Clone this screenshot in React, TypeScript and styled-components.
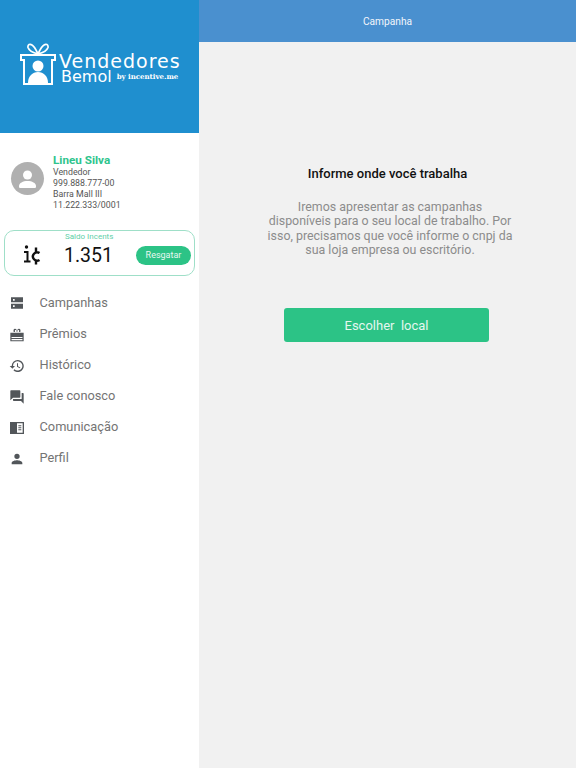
import React from "react"
import styled, { createGlobalStyle } from "styled-components"

const GlobalStyle = createGlobalStyle`
  html, body {
    margin: 0;
    padding: 0;
    height: 768px;
    overflow: hidden;
    background: #f1f1f1;
    font-family: Roboto, "Liberation Sans", sans-serif;
  }
`

const Page = styled.div`
  display: flex;
  width: 576px;
  height: 768px;
`
const Sidebar = styled.aside`
  width: 199px;
  flex-shrink: 0;
  background: #fff;
  display: flex;
  flex-direction: column;
`
const LogoArea = styled.div`
  height: 133px;
  background: #1f8fcf;
  display: flex;
  align-items: center;
  padding: 0 0 6px 20px;
  box-sizing: border-box;
  color: #fff;
`
const LogoText = styled.div`
  display: flex;
  flex-direction: column;
  margin-left: 3px;
  margin-top: 11px;
`
const LogoTitle = styled.div`
  font-family: "DejaVu Sans", sans-serif;
  font-size: 19px;
  line-height: 15px;
  letter-spacing: 1px;
`
const LogoSub = styled.div`
  display: flex;
  align-items: baseline;
  gap: 5px;
  margin-left: 2px;
`
const LogoBemol = styled.span`
  font-family: "DejaVu Sans", sans-serif;
  font-size: 16px;
  line-height: 15px;
`
const LogoBy = styled.span`
  font-family: "DejaVu Serif", serif;
  font-size: 7px;
  font-weight: 700;
  position: relative;
  top: -3px;
`
const Profile = styled.div`
  display: flex;
  align-items: flex-start;
  padding: 21px 0 0 11px;
`
const Avatar = styled.div`
  width: 33px;
  height: 33px;
  border-radius: 50%;
  background: #b0b0b0;
  display: flex;
  align-items: center;
  justify-content: center;
  margin: 8px 9px 0 0;
`
const ProfileText = styled.div`
  display: flex;
  flex-direction: column;
`
const ProfileName = styled.div`
  color: #2fc48d;
  font-size: 11.7px;
  font-weight: 700;
  line-height: 13px;
`
const ProfileLine = styled.div`
  color: #555;
  font-size: 8.8px;
  line-height: 11px;
`
const Balance = styled.div`
  margin: 19px 0 0 4px;
  width: 191px;
  height: 46px;
  box-sizing: border-box;
  border: 1px solid #9fdfc8;
  border-radius: 10px;
  position: relative;
  display: flex;
  align-items: center;
  padding: 4px 3px 0 19px;
`
const BalanceLabel = styled.div`
  position: absolute;
  top: 0;
  left: 60px;
  color: #5fcfa8;
  font-size: 8px;
  line-height: 11px;
`
const BalanceValue = styled.div`
  flex: 1;
  text-align: center;
  color: #111;
  font-size: 19.5px;
`
const RedeemButton = styled.div`
  width: 55px;
  height: 19px;
  border-radius: 10px;
  background: #2cc386;
  color: #e8f8f1;
  font-size: 9px;
  display: flex;
  align-items: center;
  justify-content: center;
`
const Menu = styled.nav`
  display: flex;
  flex-direction: column;
  margin-top: 11px;
`
const MenuItem = styled.div`
  height: 31px;
  display: flex;
  align-items: center;
  padding-left: 9px;
  color: #747474;
  font-size: 12.8px;
`
const MenuIcon = styled.svg<{ $drop: number }>`
  width: 16px;
  height: 16px;
  margin-right: 14.5px;
  margin-top: ${props => props.$drop}px;
  fill: #52565a;
`
const Main = styled.main`
  flex: 1;
  display: flex;
  flex-direction: column;
`
const TopBar = styled.div`
  height: 42px;
  background: #4a90cf;
  color: #f2f6fb;
  font-size: 10.2px;
  display: flex;
  align-items: center;
  justify-content: center;
`
const Content = styled.div`
  display: flex;
  flex-direction: column;
  align-items: center;
  padding-top: 124px;
`
const Heading = styled.h2`
  margin: 0;
  color: #111;
  font-size: 13px;
  font-weight: 500;
  line-height: 16px;
`
const Description = styled.p`
  margin: 18px 0 0 5px;
  width: 247px;
  color: #8c8c8c;
  font-size: 12.4px;
  line-height: 14.4px;
  text-align: center;
`
const ChooseButton = styled.div`
  margin: 50.4px 2px 0 0;
  width: 205px;
  height: 34px;
  border-radius: 3px;
  background: #2cc386;
  color: #e4f7ef;
  font-size: 13px;
  white-space: pre;
  display: flex;
  align-items: center;
  justify-content: center;
`

const menuItems = [
  { label: "Campanhas", drop: 1, icon: "M3 3.500h18v7.500H3V3.500zm0 9.500h18v7.500H3V13zm3-7v2.500h2.500V6H6zm0 9.500V18h2.500v-2.500H6z" },
  { label: "Prêmios", drop: 2, icon: "M2 8.500h20v13H2v-13zM3.800 15v1.500h16.400V15H3.800zm0 3v1.900h16.400V18H3.800zM7 7.500C6 3.500 8 2 10 3c1 .5 2 2 2 3 0-1 1-2.500 2-3 2-1 4 .5 3 4.500h-2c.5-2 0-3-1-3s-1.500 1-1.500 3h-1c0-2-.5-3-1.500-3s-1.500 1-1 3H7z" },
  { label: "Histórico", drop: 3, icon: "M13 3a9 9 0 0 0-9 9H1l3.900 3.900.1.100L9 12H6a7 7 0 1 1 2.100 4.900l-1.400 1.400A9 9 0 1 0 13 3zm-1 5v5l4.300 2.500.7-1.200-3.500-2.100V8H12z" },
  { label: "Fale conosco", drop: 3, icon: "M21 6h-2v9H6v2c0 .6.400 1 1 1h11l4 4V7c0-.6-.400-1-1-1zm-4 6V3c0-.6-.400-1-1-1H3c-.6 0-1 .4-1 1v14l4-4h10c.6 0 1-.4 1-1z" },
  { label: "Comunicação", drop: 3, icon: "M1.500 3h21v18h-21V3zM12 5v14h8.500V5H12zm2 3h4.500v1.500H14V8zm0 3h4.500v1.500H14V11zm0 3h4.500v1.500H14V14z" },
  { label: "Perfil", drop: 3, icon: "M12 12a4 4 0 1 0 0-8 4 4 0 0 0 0 8zm0 2c-2.700 0-8 1.300-8 4v2h16v-2c0-2.700-5.300-4-8-4z" },
]

export default function App() {
  return (
    <Page>
      <GlobalStyle />
      <Sidebar>
        <LogoArea>
          <svg width="36" height="42" viewBox="0 0 36 42" fill="none">
            <path d="M18 11C14 10 9 7.500 8 4.500 7.500 1.500 10 .5 12 2 15 4 16.500 8 18 11zM18 11c4-1 9-3.500 10-6.500.5-3-2-4-4-2.500-3 2-4.500 6-6 9z" stroke="#fff" strokeWidth="1.700" />
            <path d="M1 12h34v5h-3v24H4V17H1z" stroke="#fff" strokeWidth="2" />
            <circle cx="18" cy="23" r="5.500" fill="#fff" />
            <path d="M8 40c0-7 4.500-11 10-11s10 4 10 11z" fill="#fff" />
          </svg>
          <LogoText>
            <LogoTitle>Vendedores</LogoTitle>
            <LogoSub>
              <LogoBemol>Bemol</LogoBemol>
              <LogoBy>by incentive.me</LogoBy>
            </LogoSub>
          </LogoText>
        </LogoArea>
        <Profile>
          <Avatar>
            <svg width="17" height="18" viewBox="0 0 17 18" fill="#fff">
              <circle cx="8.500" cy="5" r="4.500" />
              <path d="M1 18c-1 0-1-1-1-2 0-3 4-5 8.500-5S17 13 17 16c0 1 0 2-1 2z" />
            </svg>
          </Avatar>
          <ProfileText>
            <ProfileName>Lineu Silva</ProfileName>
            <ProfileLine>Vendedor</ProfileLine>
            <ProfileLine>999.888.777-00</ProfileLine>
            <ProfileLine>Barra Mall III</ProfileLine>
            <ProfileLine>11.222.333/0001</ProfileLine>
          </ProfileText>
        </Profile>
        <Balance>
          <BalanceLabel>Saldo Incents</BalanceLabel>
          <svg width="17" height="20" viewBox="0 0 17 20" fill="none" stroke="#111">
            <circle cx="2.500" cy="2" r="1.700" fill="#111" stroke="none" />
            <path d="M0 7h3.500v9M0 16.500h6.500" strokeWidth="2" />
            <path d="M15.500 8a4.200 4.200 0 1 0 0 7M12 2.500v4M12 16.500v3" strokeWidth="2.400" />
          </svg>
          <BalanceValue>1.351</BalanceValue>
          <RedeemButton>Resgatar</RedeemButton>
        </Balance>
        <Menu>
          {menuItems.map(item => (
            <MenuItem key={item.label}>
              <MenuIcon viewBox="0 0 24 24" $drop={item.drop}>
                <path d={item.icon} fillRule="evenodd" />
              </MenuIcon>
              {item.label}
            </MenuItem>
          ))}
        </Menu>
      </Sidebar>
      <Main>
        <TopBar>Campanha</TopBar>
        <Content>
          <Heading>Informe onde você trabalha</Heading>
          <Description>
            Iremos apresentar as campanhas disponíveis para o seu local de trabalho. Por isso, precisamos que você informe o cnpj da sua loja empresa ou escritório.
          </Description>
          <ChooseButton>Escolher  local</ChooseButton>
        </Content>
      </Main>
    </Page>
  )
}
